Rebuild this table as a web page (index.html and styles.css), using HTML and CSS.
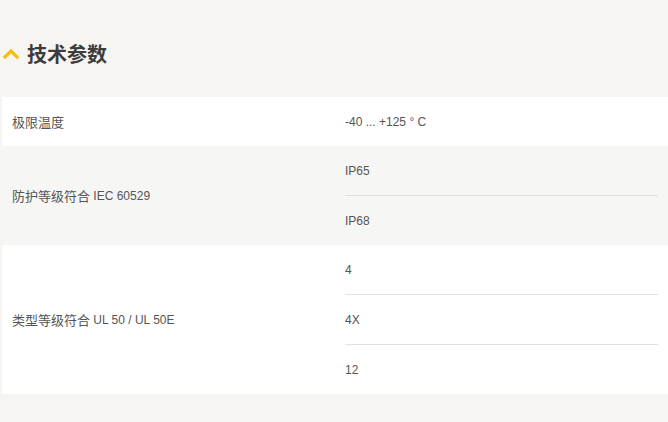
FILE: index.html
```html
<!DOCTYPE html>
<html lang="zh">
<head>
<meta charset="utf-8">
<link rel="stylesheet" href="styles.css">
</head>
<body>
<section class="specs">
  <h2 class="specs-title">
    <svg class="chev" width="16" height="11" viewBox="0 0 16 11"><polyline points="2,9 8,3 14,9" fill="none" stroke="#f5bd14" stroke-width="3.2" stroke-linecap="square"/></svg>
    <span>技术参数</span>
  </h2>
  <div class="table">
    <div class="row white">
      <div class="label"><span class="cjk">极限温度</span></div>
      <div class="values"><div class="val">-40 ... +125 ° C</div></div>
    </div>
    <div class="row gray">
      <div class="label"><span class="cjk">防护等级符合</span>&nbsp;IEC 60529</div>
      <div class="values"><div class="val">IP65</div><div class="val">IP68</div></div>
    </div>
    <div class="row white">
      <div class="label"><span class="cjk">类型等级符合</span>&nbsp;UL 50 / UL 50E</div>
      <div class="values"><div class="val">4</div><div class="val">4X</div><div class="val">12</div></div>
    </div>
  </div>
</section>
</body>
</html>
```
FILE: styles.css
```css
html, body { margin: 0; padding: 0; }
body {
  background: #f6f5f2;
  font-family: "Liberation Sans", "Noto Sans CJK SC", sans-serif;
  color: #555;
  width: 668px;
  height: 422px;
  overflow: hidden;
}
.specs { padding-top: 39px; }
.specs-title {
  margin: 0 0 0 3px;
  height: 28px;
  display: flex;
  align-items: center;
  gap: 8px;
  font-family: "Noto Sans CJK SC", sans-serif;
  font-size: 20px;
  font-weight: 700;
  color: #3c3c3c;
}
.chev { display: block; margin-top: 1px; }
.table { margin: 30px 0 0 2px; }
.row {
  display: grid;
  grid-template-columns: 333px 1fr;
}
.row.white { background: #fff; }
.row.gray { background: #f6f6f4; }
.label {
  display: flex;
  align-items: center;
  padding-left: 10px;
  font-size: 12px;
  white-space: nowrap;
}
.cjk { font-family: "Noto Sans CJK SC", sans-serif; font-size: 13px; }
.values { padding: 0 10px; }
.val {
  height: 49px;
  display: flex;
  align-items: center;
  font-size: 12px;
}
.val + .val { border-top: 1px solid #e2e2e2; }
```
